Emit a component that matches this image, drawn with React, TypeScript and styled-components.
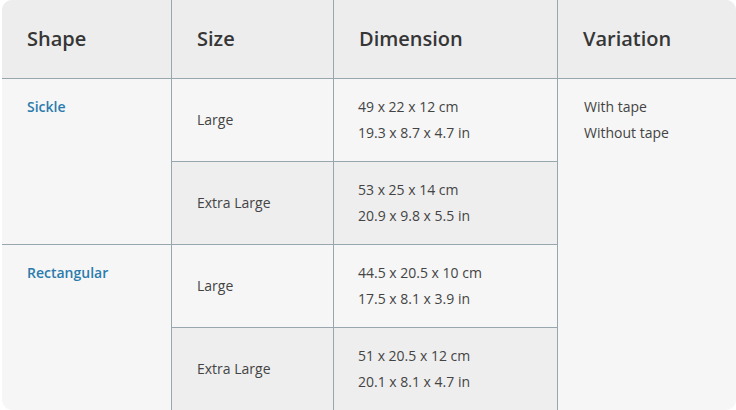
import React from "react";
import styled, { createGlobalStyle } from "styled-components";

const Global = createGlobalStyle`
  body {
    margin: 0;
    background: #ffffff;
    font-family: "Open Sans", "Liberation Sans", sans-serif;
  }
`;

const Card = styled.div`
  margin-left: 2px;
  width: 734px;
  height: 410px;
  border-radius: 10px;
  overflow: hidden;
  background-color: #f6f6f6;
`;

const Table = styled.table`
  width: 734px;
  table-layout: fixed;
  border-collapse: separate;
  border-spacing: 0;
`;

const Head = styled.th<{ $last?: boolean }>`
  height: 79px;
  padding: 0 25px 2px;
  box-sizing: border-box;
  text-align: left;
  font-size: 20px;
  font-weight: 600;
  color: #363636;
  background-color: #ededed;
  border-bottom: 1px solid #98a6ae;
  border-right: ${(p) => (p.$last ? "none" : "1px solid #98a6ae")};
`;

const ShapeCell = styled.td<{ $last?: boolean }>`
  vertical-align: top;
  padding: 15px 25px 0;
  font-size: 14px;
  line-height: 26px;
  font-weight: 600;
  color: #2b7bad;
  border-right: 1px solid #98a6ae;
  border-bottom: ${(p) => (p.$last ? "none" : "1px solid #98a6ae")};
`;

const Cell = styled.td<{ $alt?: boolean; $last?: boolean; $pad?: number }>`
  height: ${(p) => (p.$last ? 82 : 83)}px;
  box-sizing: border-box;
  vertical-align: middle;
  padding: 0 ${(p) => p.$pad ?? 25}px;
  font-size: 14px;
  line-height: 26px;
  color: #444444;
  background-color: ${(p) => (p.$alt ? "#eeeeee" : "transparent")};
  border-right: 1px solid #98a6ae;
  border-bottom: ${(p) => (p.$last ? "none" : "1px solid #98a6ae")};
`;

const VariationCell = styled.td`
  vertical-align: top;
  padding: 15px 26px 0;
  font-size: 14px;
  line-height: 26px;
  color: #444444;
`;

const Line = styled.div``;

type Row = { size: string; cm: string; inch: string };
type Group = { shape: string; rows: Row[] };

const groups: Group[] = [
  {
    shape: "Sickle",
    rows: [
      { size: "Large", cm: "49 x 22 x 12 cm", inch: "19.3 x 8.7 x 4.7 in" },
      { size: "Extra Large", cm: "53 x 25 x 14 cm", inch: "20.9 x 9.8 x 5.5 in" },
    ],
  },
  {
    shape: "Rectangular",
    rows: [
      { size: "Large", cm: "44.5 x 20.5 x 10 cm", inch: "17.5 x 8.1 x 3.9 in" },
      { size: "Extra Large", cm: "51 x 20.5 x 12 cm", inch: "20.1 x 8.1 x 4.7 in" },
    ],
  },
];

const App: React.FC = () => {
  return (
    <>
      <Global />
      <Card>
        <Table>
          <colgroup>
            <col style={{ width: 170 }} />
            <col style={{ width: 162 }} />
            <col style={{ width: 224 }} />
            <col style={{ width: 178 }} />
          </colgroup>
          <thead>
            <tr>
              <Head>Shape</Head>
              <Head>Size</Head>
              <Head>Dimension</Head>
              <Head $last>Variation</Head>
            </tr>
          </thead>
          <tbody>
            {groups.map((g, gi) =>
              g.rows.map((r, ri) => {
                const last = gi === groups.length - 1 && ri === g.rows.length - 1;
                return (
                  <tr key={g.shape + r.size}>
                    {ri === 0 && (
                      <ShapeCell rowSpan={g.rows.length} $last={gi === groups.length - 1}>
                        {g.shape}
                      </ShapeCell>
                    )}
                    <Cell $alt={ri === 1} $last={last}>
                      {r.size}
                    </Cell>
                    <Cell $alt={ri === 1} $last={last} $pad={24}>
                      <Line>{r.cm}</Line>
                      <Line>{r.inch}</Line>
                    </Cell>
                    {gi === 0 && ri === 0 && (
                      <VariationCell rowSpan={4}>
                        <Line>With tape</Line>
                        <Line>Without tape</Line>
                      </VariationCell>
                    )}
                  </tr>
                );
              })
            )}
          </tbody>
        </Table>
      </Card>
    </>
  );
};

export default App;
